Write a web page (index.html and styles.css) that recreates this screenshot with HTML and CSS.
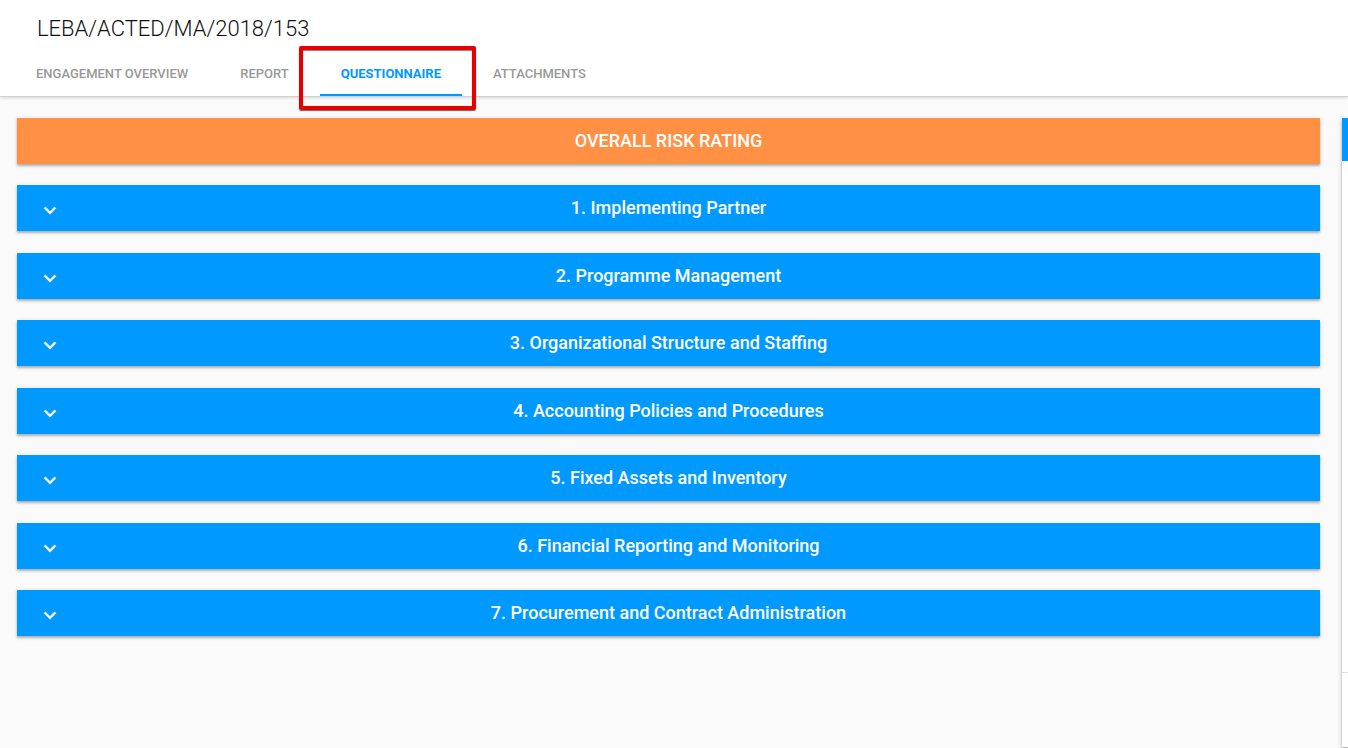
FILE: index.html
```html
<!DOCTYPE html>
<html lang="en">
<head>
<meta charset="utf-8">
<title>LEBA/ACTED/MA/2018/153</title>
<link rel="stylesheet" href="styles.css">
</head>
<body>
<svg class="sprite" aria-hidden="true">
  <symbol id="chevron" viewBox="0 0 24 24"><path d="M7.41 7.84 12 12.42l4.59-4.58L18 9.25l-6 6-6-6z"/></symbol>
</svg>
<header class="header">
  <h1 class="title">LEBA/ACTED/MA/2018/153</h1>
  <nav class="tabs">
    <a class="tab" href="#overview">ENGAGEMENT OVERVIEW</a>
    <a class="tab" href="#report">REPORT</a>
    <a class="tab tab-active" href="#questionnaire" aria-current="page">QUESTIONNAIRE<span class="highlight"></span></a>
    <a class="tab" href="#attachments">ATTACHMENTS</a>
  </nav>
</header>
<main class="layout">
  <div class="sections">
    <h2 class="bar bar-rating">OVERALL RISK RATING</h2>
    <button class="bar" type="button" aria-expanded="false"><svg class="chevron" aria-hidden="true"><use href="#chevron"/></svg>1. Implementing Partner</button>
    <button class="bar" type="button" aria-expanded="false"><svg class="chevron" aria-hidden="true"><use href="#chevron"/></svg>2. Programme Management</button>
    <button class="bar" type="button" aria-expanded="false"><svg class="chevron" aria-hidden="true"><use href="#chevron"/></svg>3. Organizational Structure and Staffing</button>
    <button class="bar" type="button" aria-expanded="false"><svg class="chevron" aria-hidden="true"><use href="#chevron"/></svg>4. Accounting Policies and Procedures</button>
    <button class="bar" type="button" aria-expanded="false"><svg class="chevron" aria-hidden="true"><use href="#chevron"/></svg>5. Fixed Assets and Inventory</button>
    <button class="bar" type="button" aria-expanded="false"><svg class="chevron" aria-hidden="true"><use href="#chevron"/></svg>6. Financial Reporting and Monitoring</button>
    <button class="bar" type="button" aria-expanded="false"><svg class="chevron" aria-hidden="true"><use href="#chevron"/></svg>7. Procurement and Contract Administration</button>
  </div>
  <aside class="panel">
    <div class="panel-head"></div>
    <div class="panel-body"></div>
    <div class="panel-foot"></div>
  </aside>
</main>
</body>
</html>
```
FILE: styles.css
```css
* {
  box-sizing: border-box;
}

body {
  display: flex;
  flex-direction: column;
  min-height: 100vh;
  margin: 0;
  overflow-x: hidden;
  background: #fafafa;
  font-family: Roboto, "Liberation Sans", sans-serif;
}

.sprite {
  display: none;
}

.header {
  position: relative;
  background: #fff;
  border-bottom: 1px solid #d0d0d0;
  box-shadow: 0 1px 3px rgba(0, 0, 0, 0.14);
}

.title {
  margin: 0;
  padding: 13px 37px 5px;
  color: #111;
  font-size: 22px;
  font-weight: 300;
  line-height: 32px;
}

.tabs {
  display: flex;
  gap: 10px;
  padding: 0 15px;
}

.tab {
  position: relative;
  padding: 4px 21px 0;
  border-bottom: 2px solid transparent;
  color: #999;
  font-size: 13px;
  font-weight: 500;
  line-height: 40px;
  text-decoration: none;
}

.tab-active {
  border-bottom-color: #09f;
  color: #09f;
  font-weight: 700;
}

.highlight {
  position: absolute;
  inset: -4px -14px -16px -21px;
  border: 4px solid #e60000;
  border-radius: 2px;
  box-shadow: 0 1px 1px rgba(0, 0, 0, 0.6), inset 0 1px 1px rgba(0, 0, 0, 0.5);
}

.layout {
  display: flex;
  flex: 1;
  gap: 22px;
  padding: 21px 0 1px 17px;
}

.sections {
  flex: 1;
}

.bar {
  position: relative;
  display: block;
  width: 100%;
  margin: 22px 0 0;
  padding: 11px 64px;
  border: 0;
  background: #09f;
  box-shadow: 0 2px 2px rgba(0, 0, 0, 0.24), 0 1px 5px rgba(0, 0, 0, 0.12);
  color: #fff;
  font-family: inherit;
  font-size: 18px;
  font-weight: 500;
  line-height: 24px;
  text-align: center;
}

.bar:nth-child(even) {
  margin-top: 21px;
}

.bar-rating {
  margin-top: 0;
  background: #ff9044;
}

.chevron {
  position: absolute;
  top: 14px;
  left: 21px;
  width: 24px;
  height: 24px;
  fill: #fff;
  stroke: #fff;
  stroke-width: 0.4;
}

.panel {
  display: flex;
  flex: 0 0 6px;
  flex-direction: column;
  background: #fff;
  box-shadow: 0 2px 2px rgba(0, 0, 0, 0.24), 0 1px 5px rgba(0, 0, 0, 0.2);
}

.panel-head {
  height: 43px;
  background: #09f;
}

.panel-body {
  flex: 1;
}

.panel-foot {
  height: 75px;
  border-top: 1px solid #e0e0e0;
}
```
